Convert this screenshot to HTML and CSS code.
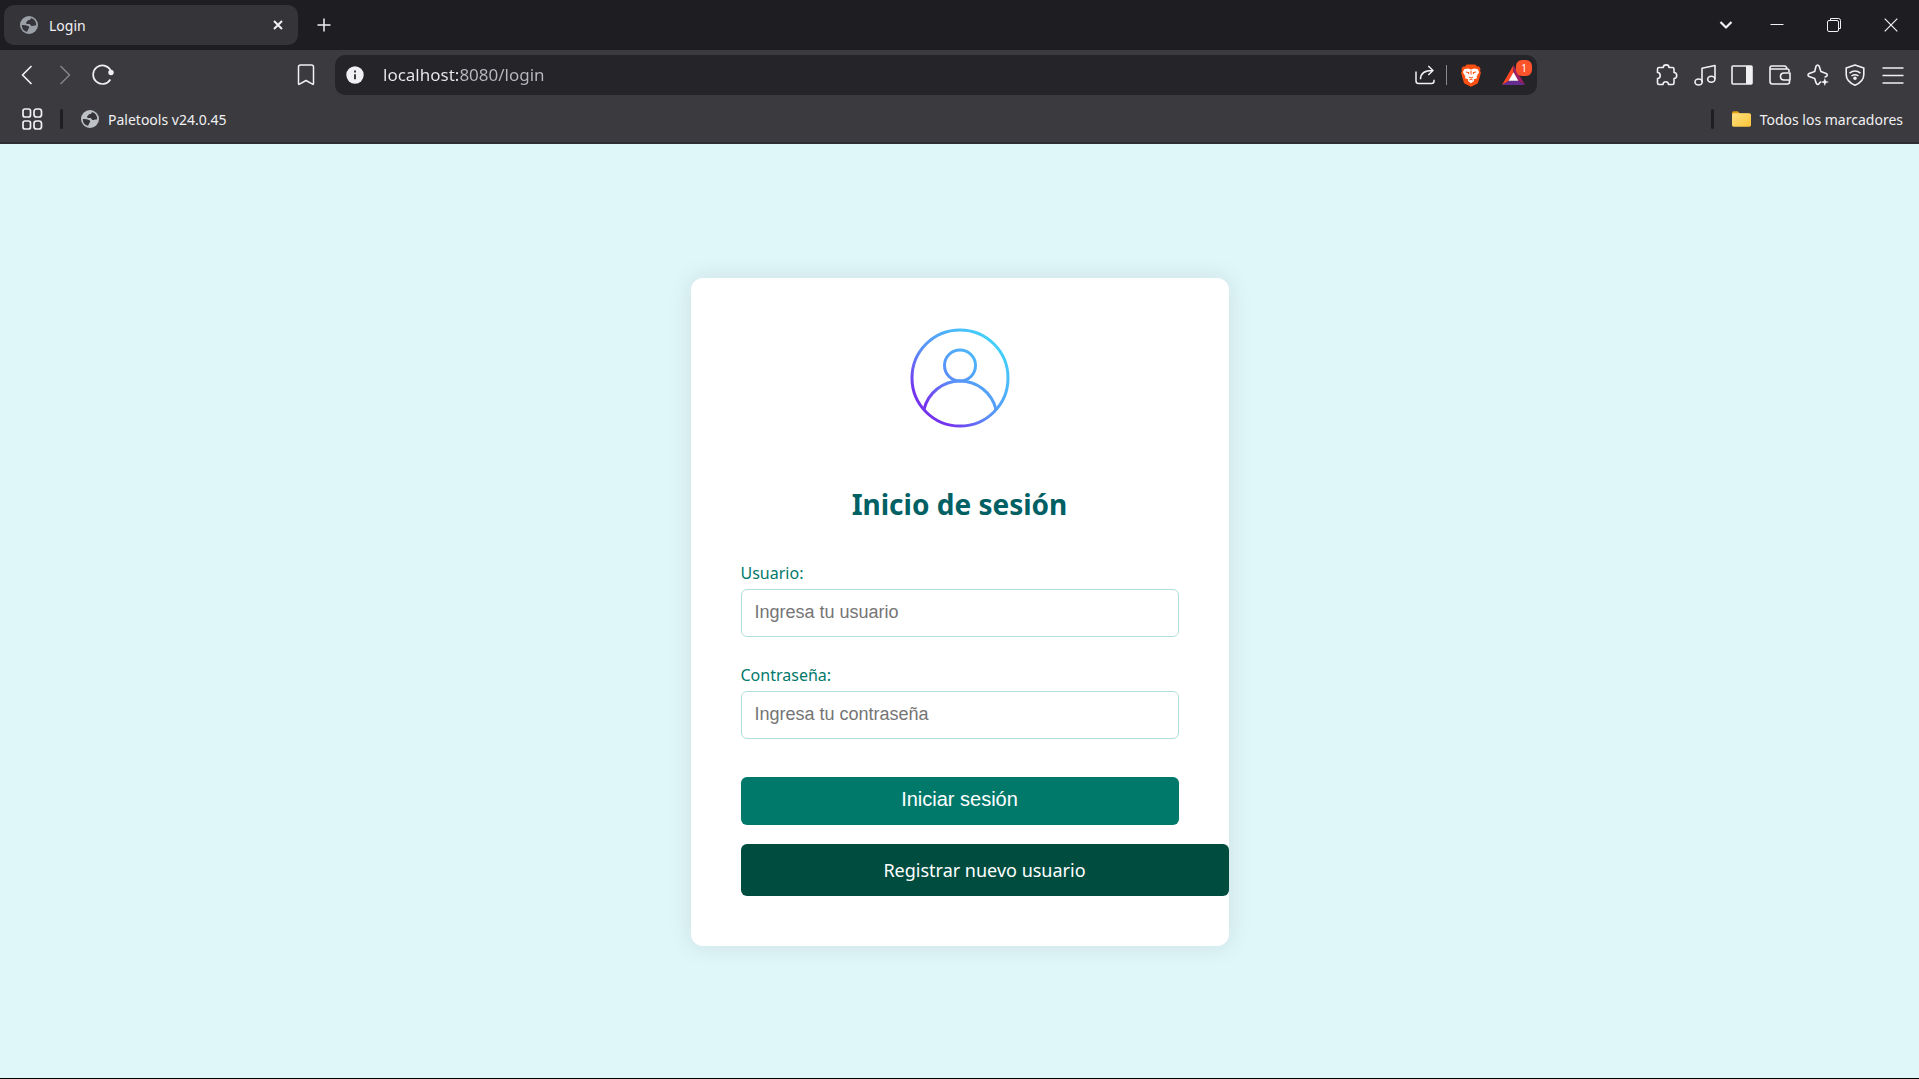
FILE: index.html
```html
<!DOCTYPE html>
<html lang="es">
<head>
<meta charset="utf-8">
<title>Login</title>
<meta name="viewport" content="width=device-width, initial-scale=1">
<link rel="stylesheet" href="styles.css">
</head>
<body>
<svg class="defs" aria-hidden="true">
  <symbol id="globe" viewBox="0 0 18 18">
    <circle cx="9" cy="9" r="9" fill="currentColor"/>
    <path class="land" d="M10.800 1.900C10.900 3.300 10 3.900 8.600 4.100 7.600 4.300 7.800 5.400 6.800 5.700c-1 .4-1 1.700-.1 2.100.9.400 2-.1 2.900.3 1 .4.800 1.600 1.900 1.900 1.300.3 2.200-.7 4.600-.5A7.300 7.300 0 0 0 10.800 1.900zM1.800 9c1.700-.3 3.600 0 5 .6 1.500.6 2.400.8 2.400 1.900 0 1-.8 1-1 1.900-.1.900-1.200 1-1 2.600A7.300 7.300 0 0 1 1.800 9z"/>
  </symbol>
</svg>
<div class="browser">
  <header class="chrome">
    <div class="tabstrip">
      <div class="tab">
        <svg class="globe" width="18" height="18"><use href="#globe"/></svg>
        <span class="tab-title">Login</span>
        <button class="tab-close" aria-label="Cerrar pestaña"><svg width="10" height="10" viewBox="0 0 10 10"><path d="M1 1l8 8M9 1L1 9" stroke-width="2"/></svg></button>
      </div>
      <button class="new-tab" aria-label="Nueva pestaña"><svg width="14" height="14" viewBox="0 0 14 14"><path d="M7 .5v13M.5 7h13" stroke-width="1.500"/></svg></button>
      <div class="window-controls">
        <button class="search-tabs" aria-label="Buscar pestañas"><svg width="14" height="10" viewBox="0 0 14 10"><path d="M1.500 2L7 7.500 12.500 2" stroke-width="2.200"/></svg></button>
        <button aria-label="Minimizar"><svg width="14" height="14" viewBox="0 0 14 14"><path d="M.5 6.500h13" stroke-width="1"/></svg></button>
        <button aria-label="Restaurar"><svg width="14" height="14" viewBox="0 0 14 14"><path d="M3.500 2V.5h8q2 0 2 2v8H12" stroke-width="1"/><rect x=".5" y="2.500" width="11" height="11" rx="1.500" stroke-width="1"/></svg></button>
        <button aria-label="Cerrar"><svg width="14" height="14" viewBox="0 0 14 14"><path d="M.7.7l12.600 12.600M13.300.7L.7 13.300" stroke-width="1.200"/></svg></button>
      </div>
    </div>

    <div class="toolbar">
      <div class="nav">
        <button aria-label="Atrás"><svg width="20" height="20" viewBox="0 0 20 20"><path d="M14.500 1L5.500 10l9 9" stroke-width="1.700"/></svg></button>
        <button disabled aria-label="Adelante"><svg width="20" height="20" viewBox="0 0 20 20"><path d="M5.500 1l9 9-9 9" stroke-width="1.500"/></svg></button>
        <button aria-label="Recargar"><svg width="22" height="22" viewBox="0 0 22 22"><path d="M18.400 15.500A9.300 9.300 0 1 1 18.600 6.200" stroke-width="1.700"/><circle cx="19" cy="8.500" r="2.700" fill="currentColor" stroke="none"/></svg></button>
      </div>
      <button class="bookmark" aria-label="Añadir marcador"><svg width="18" height="22" viewBox="0 0 18 22"><path d="M1.500 19.600V3q0-2 2-2h11q2 0 2 2v16.600q0 1.200-1 .6L9 16.500l-6.500 3.700q-1 .6-1-.6z" stroke-width="1.500"/></svg></button>
      <div class="address">
        <button class="info" aria-label="Información del sitio"><svg width="18" height="18" viewBox="0 0 18 18"><circle cx="9" cy="9" r="8.700" fill="currentColor" stroke="none"/><path class="mark" d="M9 8.200v5M9 4.600v2" stroke-width="2"/></svg></button>
        <input class="url" type="text" aria-label="Dirección" value="localhost:8080/login">
        <button class="share" aria-label="Compartir"><svg width="20" height="20" viewBox="0 0 20 20"><path d="M1 6.500V16q0 2.500 2.500 2.500h13Q19 18.500 19 16v-1.200M5.500 14.200C5.500 8.500 9 5.500 17.500 5.500M13.300 1l4.700 4.500-4.700 4.500" stroke-width="1.500"/></svg></button>
        <span class="address-rule"></span>
        <button class="shields" aria-label="Brave Shields"><svg width="20" height="23" viewBox="0 0 20 23"><path d="M5.800.4h8.400l2 2.200 1.900-.2 1.500 2.500-.6 1.900.9 2-2.600 9.200q-.4 1.300-1.600 2.100L10 22.800l-5.700-2.700q-1.200-.8-1.600-2.100L.100 8.800l.9-2-.6-1.900 1.500-2.500 1.900.2z" fill="#fb5012" stroke="none"/><path d="M3.200 5.200l3.600-.6L10 5.400l3.200-.8 3.600.6 1.300 3-2.400 4 .2 2-3 1.100L13 17l-3 2.300L7 17l.1-1.700-3-1.100.2-2-2.400-4z" fill="#fff" stroke="none"/><path d="M4.800 8l3.200.6-.5 1.600M15.200 8l-3.200.6.5 1.600M10 6.500v4M7.800 13L10 14l2.200-1M8.300 16l1.700-1 1.700 1" stroke="#fb5012" stroke-width="1"/></svg></button>
        <button class="rewards" aria-label="Brave Rewards"><svg width="23" height="20" viewBox="0 0 23 20"><g stroke="none"><path d="M11.500 0L0 20l7.500-4.500 4-7.500z" fill="#ff4724"/><path d="M11.500 0L23 20l-7.500-4.500-4-7.500z" fill="#9e1f63"/><path d="M0 20h23l-7.500-4.500h-8z" fill="#662d91"/><path d="M11.500 7.200l4.800 8.600H6.700z" fill="#fff"/></g></svg><span class="badge">1</span></button>
      </div>
      <div class="tools">
        <button aria-label="Extensiones"><svg width="22" height="22" viewBox="0 0 22 22"><path d="M1.500 5q0-1.500 1.500-1.500h4.300C7.300 0 13 0 13 3.500h3.500Q18 3.500 18 5v3.500c3.600 0 3.600 6 0 6V19q0 1.500-1.500 1.500h-4c0-3.600-5.500-3.600-5.500 0H3Q1.500 20.500 1.500 19v-4.500c3.600 0 3.600-6 0-6z" stroke-width="1.600"/></svg></button>
        <button aria-label="Multimedia"><svg width="22" height="22" viewBox="0 0 22 22"><path d="M8 18V4.300L21 1.500V15" stroke-width="1.600"/><ellipse cx="4.600" cy="18" rx="3.600" ry="3" stroke-width="1.600"/><ellipse cx="17.300" cy="15.300" rx="3.600" ry="3" stroke-width="1.600"/></svg></button>
        <button aria-label="Panel lateral"><svg width="22" height="20" viewBox="0 0 22 20"><rect x="1" y="1" width="20" height="18" rx="1" stroke-width="1.600"/><path d="M15 1h6v18h-6z" fill="currentColor" stroke="none"/></svg></button>
        <button aria-label="Cartera"><svg width="22" height="20" viewBox="0 0 22 20"><path d="M20 7V5.500Q20 4 18.500 4H1.200M1 16.500V3q0-2 2-2h12.500q2 0 2.500 3M1 16.500Q1 19 3.500 19h15q2 0 2-2v-2M21 8h-6q-3.500 0-3.500 3.400T15 15h6z" stroke-width="1.600"/></svg></button>
        <button aria-label="Asistente Leo"><svg width="22" height="22" viewBox="0 0 22 22"><path d="M13.800 17.500L12.300 19.300q-1.800 2.700-3.200-.4L7.700 14.500 2.200 12.600q-2.400-1.600 0-3.200l5.500-1.900L9 2.200q1.600-2.400 3.200 0l1.700 5.300 5.200 1.900q2.400 1.600 0 3.200l-1.500.6" stroke-width="1.600"/><path d="M17.800 14l1.100 2.900 3.100 1.100-3.100 1.100-1.100 2.900-1.100-2.900-3.100-1.100 3.100-1.100z" fill="currentColor" stroke="none"/></svg></button>
        <button aria-label="VPN"><svg width="22" height="22" viewBox="0 0 22 22"><path d="M11 1l8.800 3v6.500q0 7-8.800 10.700Q2.200 17.500 2.200 10.500V4z" stroke-width="1.600"/><path d="M5.500 9.200q5.500-4.200 11 0M7.500 12q3.500-2.600 7 0" stroke-width="1.500"/><circle cx="11" cy="14.300" r="1.700" fill="currentColor" stroke="none"/></svg></button>
        <button aria-label="Menú"><svg width="22" height="20" viewBox="0 0 22 20"><path d="M.5 3h21M.5 10.500h21M.5 18h21" stroke-width="1.600"/></svg></button>
      </div>
    </div>

    <nav class="bookmarks" aria-label="Marcadores">
      <button class="apps" aria-label="Aplicaciones"><svg width="21" height="22" viewBox="0 0 21 22"><g stroke-width="1.700"><rect x="1" y="1" width="7.500" height="8" rx="2"/><rect x="12" y="1" width="7.500" height="8" rx="2.500"/><rect x="1" y="13" width="7.500" height="8" rx="2"/><rect x="12" y="13" width="7.500" height="8" rx="2.500"/></g></svg></button>
      <span class="rule"></span>
      <a class="bookmark-link" href="#paletools"><svg class="globe light" width="18" height="18"><use href="#globe"/></svg>Paletools v24.0.45</a>
      <span class="rule rule-end"></span>
      <button class="all-bookmarks"><svg width="19" height="16" viewBox="0 0 19 16"><defs><linearGradient id="folder" x1="0" y1="0" x2="1" y2="1"><stop offset="0" stop-color="#ffe083"/><stop offset="1" stop-color="#fcc536"/></linearGradient></defs><g stroke="none"><path d="M0 2Q0 .3 1.600.3h4.200L8 2.500h8V6H0z" fill="#e0a010"/><rect y="2.300" width="19" height="13.400" rx="1.600" fill="url(#folder)"/></g></svg>Todos los marcadores</button>
    </nav>
  </header>

  <main class="page">
    <section class="card">
      <svg class="avatar" width="100" height="100" viewBox="0 0 100 100" role="img" aria-label="Usuario">
        <defs><linearGradient id="ring" gradientUnits="userSpaceOnUse" x1="16" y1="84" x2="84" y2="16"><stop offset="0" stop-color="#7434ee"/><stop offset=".07" stop-color="#7434ee"/><stop offset=".4" stop-color="#5b8df8"/><stop offset="1" stop-color="#43cff9"/></linearGradient></defs>
        <g fill="none" stroke="url(#ring)" stroke-width="3"><circle cx="50" cy="50" r="48"/><circle cx="50" cy="37.500" r="15.500"/><path d="M14 81.500a37 37 0 0 1 72 0"/></g>
      </svg>
      <h1>Inicio de sesión</h1>
      <form class="login">
        <label for="usuario">Usuario:</label>
        <input id="usuario" type="text" placeholder="Ingresa tu usuario">
        <label for="clave">Contraseña:</label>
        <input id="clave" type="password" placeholder="Ingresa tu contraseña">
        <button type="submit">Iniciar sesión</button>
      </form>
      <a class="register" href="#registro">Registrar nuevo usuario</a>
    </section>
  </main>
</div>
</body>
</html>
```
FILE: styles.css
```css
* { box-sizing: border-box; }

body {
  margin: 0;
  font-family: "Noto Sans", "Open Sans", sans-serif;
}

.defs { position: absolute; width: 0; height: 0; }

.browser {
  display: flex;
  flex-direction: column;
  min-height: 100vh;
}

/* Browser frame */
.chrome {
  background: #3b3a3f;
  color: #f1f1f3;
  border-bottom: 2px solid #2f2d34;
  font-size: 14px;
}

.chrome button {
  display: flex;
  align-items: center;
  justify-content: center;
  padding: 0;
  border: 0;
  background: none;
  color: inherit;
  font: inherit;
}

.chrome button svg {
  fill: none;
  stroke: currentColor;
  stroke-linejoin: round;
}

.chrome button:disabled { color: #858489; }

.globe { color: #9aa0a6; flex: none; }
.globe.light { color: #bdc1c6; }
.land { fill: #35343a; }

.tabstrip {
  display: flex;
  align-items: center;
  height: 50px;
  padding-left: 4px;
  background: #1e1d22;
}

.tab {
  display: flex;
  align-items: center;
  gap: 11px;
  width: 294px;
  height: 40px;
  padding: 0 10px 0 16px;
  border-radius: 10px;
  background: #353439;
}

.tab-title { flex: 1; }
.chrome .tab-close { width: 20px; height: 20px; }
.chrome .new-tab { width: 52px; height: 40px; }

.window-controls { display: flex; margin-left: auto; }
.chrome .window-controls button { width: 57px; height: 50px; }
.chrome .window-controls .search-tabs { width: 45px; }

.toolbar {
  display: flex;
  align-items: center;
  height: 50px;
  padding: 0 8px;
}

.nav { display: flex; }
.chrome .nav button { width: 38px; height: 38px; }
.chrome .bookmark { width: 38px; height: 38px; margin: 0 10px 0 auto; }

.address {
  display: flex;
  align-items: center;
  flex: 0 1 1202px;
  height: 40px;
  margin-right: 112px;
  padding: 0 12px 0 11px;
  border-radius: 10px;
  background: #252429;
}

.info { color: #e2e1e8; }
.mark { stroke: #3b3a3f; }

.url {
  flex: 1;
  min-width: 0;
  margin-left: 19px;
  padding: 0;
  border: 0;
  outline: 0;
  background: linear-gradient(to right, #ececf0 76px, #b9b8bf 76px);
  -webkit-background-clip: text;
  background-clip: text;
  color: transparent;
  font-family: inherit;
  font-size: 17px;
  line-height: 24px;
}

.share { color: #b9b8bf; }

.address-rule {
  width: 1px;
  height: 20px;
  margin: 0 14px 0 11px;
  background: #8a898f;
}

.rewards {
  position: relative;
  margin-left: 21px;
}

.badge {
  position: absolute;
  top: -5px;
  right: -7px;
  width: 16px;
  height: 16px;
  border-radius: 6px;
  background: #fb542b;
  color: #fff;
  font-size: 10px;
  line-height: 16px;
  text-align: center;
}

.tools {
  display: flex;
  justify-content: space-between;
  width: 262px;
}

.chrome .tools button { width: 36px; height: 38px; }

.bookmarks {
  display: flex;
  align-items: center;
  height: 42px;
  padding: 0 16px 4px 22px;
}

.rule {
  width: 3px;
  height: 20px;
  margin: 0 18px 0 17px;
  border-radius: 2px;
  background: #1f1e23;
}

.rule-end { margin-left: auto; }

.bookmark-link {
  display: flex;
  align-items: center;
  gap: 9px;
  color: inherit;
  text-decoration: none;
}

.chrome .all-bookmarks { gap: 9px; }

/* Login page */
.page {
  display: flex;
  flex: 1;
  align-items: center;
  justify-content: center;
  background: #e0f7fa;
  box-shadow: inset 0 -1px 0 #000;
}

.card {
  width: 538px;
  padding: 50px;
  border-radius: 12px;
  background: #fff;
  box-shadow: 0 0 25px rgba(0, 0, 0, 0.1);
}

.avatar { display: block; margin: 0 auto 54px; }

h1 {
  margin: 0 0 35px;
  color: #006064;
  font-size: 28px;
  line-height: 44px;
  text-align: center;
}

.login { display: flex; flex-direction: column; }

.login label {
  margin-bottom: 4px;
  color: #00796b;
  font-size: 16px;
  line-height: 24px;
}

.login input {
  height: 48px;
  margin-bottom: 26px;
  padding: 0 13px;
  border: 1px solid #b2dfdb;
  border-radius: 6px;
  font-family: "Liberation Sans", Arial, sans-serif;
  font-size: 18px;
}

.login input::placeholder { color: #757575; }

.login button {
  height: 48px;
  margin-top: 12px;
  padding: 0 0 2px;
  border: 0;
  border-radius: 6px;
  background: #00796b;
  color: #fff;
  font-family: "Liberation Sans", Arial, sans-serif;
  font-size: 20px;
}

/* Reaches the card's right edge, past its padding */
.register {
  display: block;
  margin: 19px -50px 0 0;
  padding: 12px;
  border-radius: 6px;
  background: #004d40;
  color: #fff;
  font-size: 18px;
  line-height: 28px;
  text-align: center;
  text-decoration: none;
}
```
